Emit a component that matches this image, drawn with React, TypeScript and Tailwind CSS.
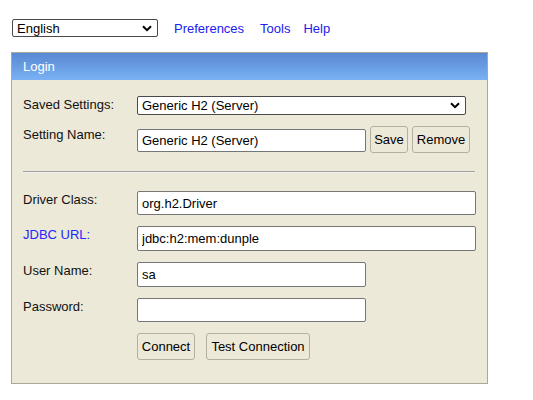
import React from "react";

function Chevron() {
  return (
    <svg width="10" height="7" viewBox="0 0 10 7" className="shrink-0">
      <path d="M1 1.2 L5 5.2 L9 1.2" fill="none" stroke="#000" strokeWidth="2" />
    </svg>
  );
}

function FakeSelect({ value, className }: { value: string; className: string }) {
  return (
    <div
      className={
        "flex items-center justify-between bg-white border border-[#4a4a4a] rounded-[2px] pl-[4px] pr-[5px] " +
        className
      }
    >
      <span className="leading-[15px] whitespace-nowrap">{value}</span>
      <Chevron />
    </div>
  );
}

function TextInput({ value, className }: { value: string; className: string }) {
  return (
    <input
      readOnly
      value={value}
      className={
        "block bg-white border border-[#767676] rounded-[2px] px-[4px] text-[13px] text-black outline-none " +
        className
      }
    />
  );
}

function Btn({ label, className }: { label: string; className: string }) {
  return (
    <button
      type="button"
      className={
        "h-[27px] bg-[#ece9d8] border border-[#b3b0a2] rounded-[3px] text-[13px] text-black flex items-center justify-center whitespace-nowrap " +
        className
      }
    >
      {label}
    </button>
  );
}

function Label({ text, blue }: { text: string; blue?: boolean }) {
  return (
    <div
      className={
        "w-[114px] shrink-0 pt-[1px] leading-[15px] whitespace-nowrap " +
        (blue ? "text-[#2525ff]" : "text-[#111]")
      }
    >
      {text}
    </div>
  );
}

export default function App() {
  return (
    <div className="min-h-[400px] w-[533px] bg-white text-[13px] text-black font-['Liberation_Sans',Arial,sans-serif]">
      <div className="flex items-center pl-[12px] pt-[19px]">
        <FakeSelect value="English" className="w-[146px] h-[18px]" />
        <a className="ml-[16px] text-[#2020ee] leading-[15px]">Preferences</a>
        <a className="ml-[16px] text-[#2020ee] leading-[15px]">Tools</a>
        <a className="ml-[13px] text-[#2020ee] leading-[15px]">Help</a>
      </div>

      <div className="ml-[11px] mt-[15px] w-[477px] border border-[#aca899] bg-[#ece9d8]">
        <div className="h-[27px] flex items-center pl-[11px] text-white bg-gradient-to-b from-[#5988d2] to-[#79b2f4]">
          Login
        </div>

        <div className="pl-[11px] pt-[16px] pb-[23px]">
          <div className="flex items-start">
            <Label text="Saved Settings:" />
            <FakeSelect value="Generic H2 (Server)" className="w-[329px] h-[19px]" />
          </div>

          <div className="flex items-start mt-[11px]">
            <Label text="Setting Name:" />
            <TextInput value="Generic H2 (Server)" className="w-[229px] h-[23px] mt-[3px]" />
            <Btn label="Save" className="ml-[4px] w-[38px]" />
            <Btn label="Remove" className="ml-[4px] w-[58px]" />
          </div>

          <div className="mt-[18px] mr-[12px] border-t border-[#a0a0a0] border-b border-b-[#f4f2ea]" />

          <div className="flex items-start mt-[18px]">
            <Label text="Driver Class:" />
            <TextInput value="org.h2.Driver" className="w-[339px] h-[24px]" />
          </div>

          <div className="flex items-start mt-[11px]">
            <Label text="JDBC URL:" blue />
            <TextInput value="jdbc:h2:mem:dunple" className="w-[339px] h-[25px]" />
          </div>

          <div className="flex items-start mt-[11px]">
            <Label text="User Name:" />
            <TextInput value="sa" className="w-[229px] h-[25px]" />
          </div>

          <div className="flex items-start mt-[11px]">
            <Label text="Password:" />
            <TextInput value="" className="w-[229px] h-[24px]" />
          </div>

          <div className="flex items-start mt-[11px] pl-[114px]">
            <Btn label="Connect" className="w-[58px]" />
            <Btn label="Test Connection" className="ml-[11px] w-[104px]" />
          </div>
        </div>
      </div>
    </div>
  );
}
